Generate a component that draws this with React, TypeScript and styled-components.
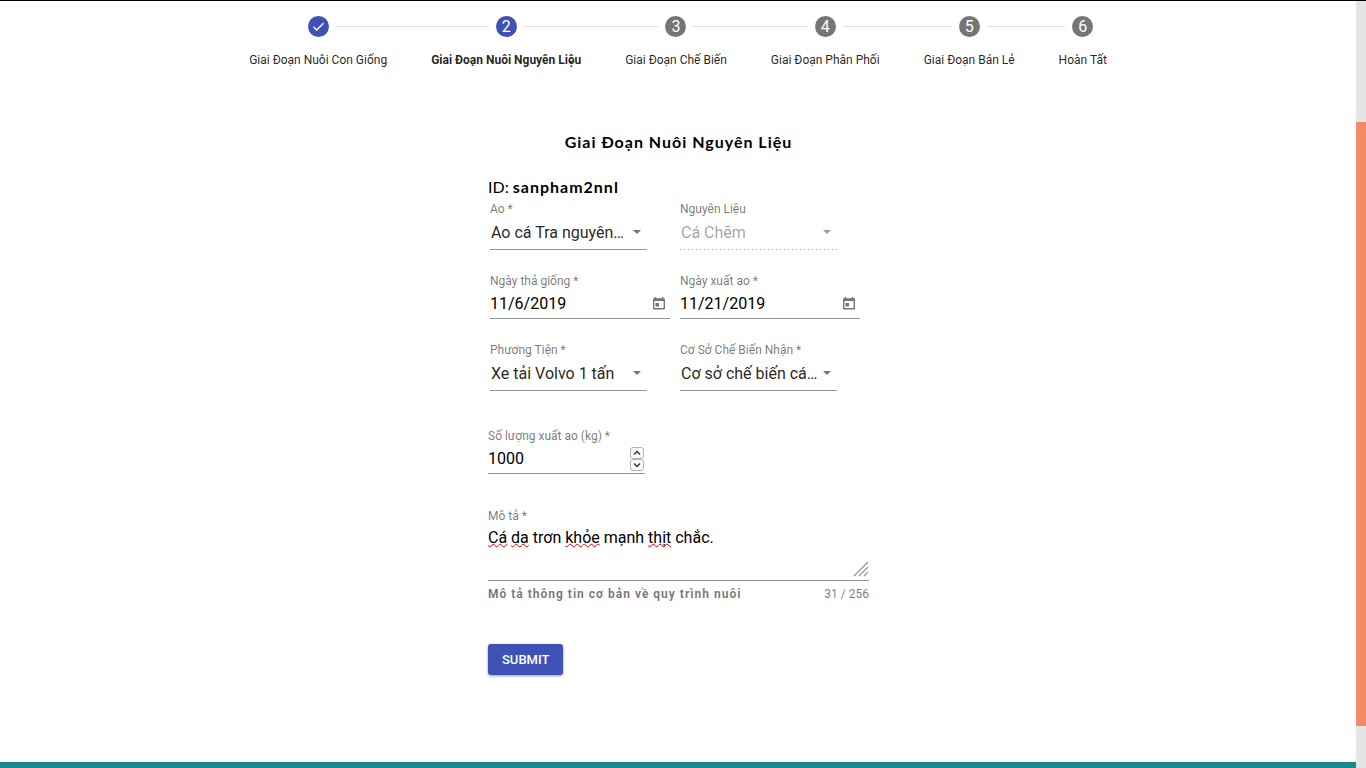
import React, { useState } from "react";
import styled, { createGlobalStyle } from "styled-components";

const GlobalStyle = createGlobalStyle`
  *, *::before, *::after { box-sizing: border-box; }
  body {
    margin: 0;
    background: #fff;
    color: #000;
    font-family: Roboto, "Liberation Sans", sans-serif;
    font-size: 16px;
  }
`;

const Window = styled.div`
  display: flex;
  min-height: 100vh;
  border-top: 1px solid #000;
`;

const Page = styled.div`
  flex: 1;
  min-width: 0;
  display: flex;
  flex-direction: column;
`;

const ScrollTrack = styled.div`
  width: 10px;
  display: grid;
  grid-template-rows: 121fr 604fr 42fr;
  background: #e5e5e5;
`;

const ScrollThumb = styled.div`
  grid-row: 2;
  background: #f18c66;
`;

const Stepper = styled.ol`
  display: flex;
  justify-content: center;
  margin: 0;
  padding: 15px 0 0;
  list-style: none;
`;

const Step = styled.li`
  display: flex;
  flex-direction: column;
  gap: 15px;
`;

const StepTrack = styled.div`
  display: flex;
  align-items: center;
  gap: 8px;
`;

const StepLine = styled.span<{ $hidden?: boolean }>`
  flex: 1;
  height: 1px;
  margin: 0 -1px;
  background: ${(p) => (p.$hidden ? "transparent" : "#e0e0e0")};
`;

const StepCircle = styled.span<{ $on: boolean }>`
  display: flex;
  align-items: center;
  justify-content: center;
  width: 21px;
  height: 21px;
  border-radius: 50%;
  background: ${(p) => (p.$on ? "#3f51b5" : "#757575")};
  color: #fff;
  font-size: 16px;
  line-height: 20px;
`;

const StepLabel = styled.span<{ $active: boolean }>`
  padding: 0 22px;
  font-size: 12px;
  line-height: 16px;
  font-weight: ${(p) => (p.$active ? 700 : 400)};
  color: rgba(0, 0, 0, 0.87);
  white-space: nowrap;
`;

const Form = styled.form`
  width: 100%;
  max-width: 382px;
  margin: 64px auto 0;
  padding-left: 1px;
  flex: 1;
`;

const Title = styled.h1`
  margin: 0;
  font-family: Lato, sans-serif;
  font-size: 16px;
  line-height: 20px;
  font-weight: 700;
  letter-spacing: 1px;
  text-align: center;
`;

const ProductId = styled.p`
  margin: 25px 0 4px;
  font-family: Lato, sans-serif;
  font-size: 16px;
  line-height: 20px;
`;

const Strong = styled.strong`
  letter-spacing: 1px;
`;

const FieldGrid = styled.div`
  display: grid;
  grid-template-columns: 180px 180px;
  gap: 23px 10px;
  padding-left: 2px;
`;

const Field = styled.div<{ $width?: string; $top?: number }>`
  width: ${(p) => p.$width ?? "100%"};
  margin-top: ${(p) => p.$top ?? 0}px;
`;

const Label = styled.label`
  display: block;
  font-size: 12px;
  line-height: 16px;
  color: rgba(0, 0, 0, 0.54);
  white-space: nowrap;
`;

const Control = styled.div<{ $height: number; $disabled?: boolean }>`
  position: relative;
  display: flex;
  align-items: center;
  height: ${(p) => p.$height}px;
  border-bottom: 1px solid #949494;
  ${(p) =>
    p.$disabled &&
    `border-bottom-color: transparent;
     background: repeating-linear-gradient(90deg, #949494 0 1px, transparent 1px 4px) left bottom / 100% 1px no-repeat border-box;`}
`;

const Select = styled.select`
  appearance: none;
  flex: 1;
  min-width: 0;
  height: 24px;
  padding: 0 0 2px 1px;
  border: 0;
  outline: 0;
  background: transparent;
  color: rgba(0, 0, 0, 0.87);
  font: 16px Roboto, sans-serif;
  text-overflow: ellipsis;
  overflow: hidden;
  white-space: nowrap;
  &:disabled {
    color: rgba(0, 0, 0, 0.38);
    opacity: 1;
  }
`;

const Caret = styled.span<{ $disabled?: boolean }>`
  width: 0;
  margin: 0 6px 2px 5px;
  border: 4px solid transparent;
  border-top-color: ${(p) => (p.$disabled ? "#9e9e9e" : "#757575")};
  border-bottom: 0;
`;

const Input = styled.input`
  appearance: textfield;
  flex: 1;
  min-width: 0;
  padding: 0;
  border: 0;
  outline: 0;
  background: transparent;
  color: #000;
  font: 16px/20px Roboto, sans-serif;
  &::-webkit-inner-spin-button { display: none; }
`;

const IconButton = styled.button`
  display: flex;
  margin: 0 4px 0 0;
  padding: 0;
  border: 0;
  background: none;
  color: #757575;
`;

const Spinner = styled.div`
  display: flex;
  flex-direction: column;
  margin-right: 1px;
`;

const SpinButton = styled.button`
  display: flex;
  align-items: center;
  justify-content: center;
  width: 14px;
  height: 12px;
  padding: 0;
  border: 1px solid #b4b4b4;
  border-radius: 3px;
  background: #fafafa;
  color: #333;
`;

const TextControl = styled(Control)`
  align-items: stretch;
`;

const TextArea = styled.textarea`
  flex: 1;
  min-width: 0;
  padding: 4px 0 0;
  border: 0;
  outline: 0;
  resize: none;
  background: transparent;
  color: #000;
  font: 16px/20px Roboto, sans-serif;
`;

const SpellLayer = styled.div`
  position: absolute;
  inset: 0;
  padding-top: 4px;
  color: transparent;
  font: 16px/20px Roboto, sans-serif;
  white-space: pre-wrap;
  pointer-events: none;
`;

const Misspelled = styled.span`
  text-decoration: underline wavy #e00000 1px;
  text-decoration-skip-ink: none;
  text-underline-offset: 0;
`;

const Grip = styled.svg`
  position: absolute;
  right: 0;
  bottom: 3px;
`;

const Hints = styled.div`
  display: flex;
  justify-content: space-between;
  margin-top: 5px;
  font-size: 12px;
  line-height: 16px;
  color: rgba(0, 0, 0, 0.54);
`;

const Submit = styled.button`
  margin: 42px 0;
  height: 31px;
  padding: 0 14px;
  border: 0;
  border-radius: 3px;
  background: #3f51b5;
  color: #fff;
  font: 500 13px Roboto, sans-serif;
  box-shadow: 0 1px 3px rgba(0, 0, 0, 0.4);
`;

const Footer = styled.footer`
  height: 6px;
  background: #1b878b;
`;

const steps = [
  "Giai Đoạn Nuôi Con Giống",
  "Giai Đoạn Nuôi Nguyên Liệu",
  "Giai Đoạn Chế Biến",
  "Giai Đoạn Phân Phối",
  "Giai Đoạn Bán Lẻ",
  "Hoàn Tất",
];

const misspelled = ["Cá", "da", "khỏe", "thịt"];

function SelectField({ id, label, value, disabled }: { id: string; label: string; value: string; disabled?: boolean }) {
  return (
    <Field $width="157px">
      <Label htmlFor={id}>{label}</Label>
      <Control $height={33} $disabled={disabled}>
        <Select id={id} disabled={disabled}>
          <option>{value}</option>
        </Select>
        <Caret $disabled={disabled} />
      </Control>
    </Field>
  );
}

function DateField({ id, label, value }: { id: string; label: string; value: string }) {
  return (
    <Field>
      <Label htmlFor={id}>{label}</Label>
      <Control $height={30}>
        <Input id={id} type="text" defaultValue={value} />
        <IconButton type="button" aria-label="Mở lịch">
          <svg width="14" height="15" viewBox="0 0 14 15" fill="none">
            <path d="M3.5 1v2M10.5 1v2" stroke="currentColor" strokeWidth="1.5" />
            <path d="M1.7 3.2h10.6v9.6H1.7z" stroke="currentColor" strokeWidth="1.4" strokeLinejoin="round" />
            <path d="M1.5 2.5h11v2.5h-11zM3.5 7h3.5v3.5H3.5z" fill="currentColor" />
          </svg>
        </IconButton>
      </Control>
    </Field>
  );
}

export default function App() {
  const [amount, setAmount] = useState(1000);
  const [text, setText] = useState("Cá da trơn khỏe mạnh thịt chắc.");
  const current = 1;

  return (
    <>
      <GlobalStyle />
      <Window>
        <Page>
          <Stepper>
            {steps.map((name, i) => (
              <Step key={name}>
                <StepTrack>
                  <StepLine $hidden={i === 0} />
                  <StepCircle $on={i <= current}>
                    {i < current ? (
                      <svg width="13" height="13" viewBox="0 0 13 13" fill="none" stroke="#fff" strokeWidth="1.4">
                        <path d="M1.5 6.8l3.2 3.2 6.8-6.8" />
                      </svg>
                    ) : (
                      i + 1
                    )}
                  </StepCircle>
                  <StepLine $hidden={i === steps.length - 1} />
                </StepTrack>
                <StepLabel $active={i === current}>{name}</StepLabel>
              </Step>
            ))}
          </Stepper>

          <Form onSubmit={(e) => e.preventDefault()}>
            <Title>Giai Đoạn Nuôi Nguyên Liệu</Title>
            <ProductId>
              ID: <Strong>sanpham2nnl</Strong>
            </ProductId>
            <FieldGrid>
              <SelectField id="pond" label="Ao *" value="Ao cá Tra nguyên liệu" />
              <SelectField id="material" label="Nguyên Liệu" value="Cá Chẽm" disabled />
              <DateField id="start" label="Ngày thả giống *" value="11/6/2019" />
              <DateField id="end" label="Ngày xuất ao *" value="11/21/2019" />
              <SelectField id="vehicle" label="Phương Tiện *" value="Xe tải Volvo 1 tấn" />
              <SelectField id="factory" label="Cơ Sở Chế Biến Nhận *" value="Cơ sở chế biến cá tra" />
            </FieldGrid>

            <Field $width="157px" $top={37}>
              <Label htmlFor="amount">Số lượng xuất ao (kg) *</Label>
              <Control $height={30}>
                <Input id="amount" type="number" value={amount} onChange={(e) => setAmount(Number(e.target.value))} />
                <Spinner>
                  <SpinButton type="button" aria-label="Tăng" onClick={() => setAmount(amount + 1)}>
                    <svg width="8" height="6" viewBox="0 0 8 6" fill="none" stroke="currentColor" strokeWidth="1.4">
                      <path d="M1 4.5l3-3 3 3" />
                    </svg>
                  </SpinButton>
                  <SpinButton type="button" aria-label="Giảm" onClick={() => setAmount(amount - 1)}>
                    <svg width="8" height="6" viewBox="0 0 8 6" fill="none" stroke="currentColor" strokeWidth="1.4">
                      <path d="M1 1.5l3 3 3-3" />
                    </svg>
                  </SpinButton>
                </Spinner>
              </Control>
            </Field>

            <Field $top={34}>
              <Label htmlFor="description">Mô tả *</Label>
              <TextControl $height={57}>
                <TextArea id="description" maxLength={256} value={text} onChange={(e) => setText(e.target.value)} />
                <SpellLayer aria-hidden="true">
                  {text.split(/(\s+)/).map((w, i) => (misspelled.includes(w) ? <Misspelled key={i}>{w}</Misspelled> : w))}
                </SpellLayer>
                <Grip width="16" height="16" viewBox="0 0 16 16" stroke="#999" strokeWidth="1.4">
                  <path d="M1 15L15 1M6 15l9-9M11 15l4-4" />
                </Grip>
              </TextControl>
              <Hints>
                <Strong>Mô tả thông tin cơ bản về quy trình nuôi</Strong>
                <span>{text.length} / 256</span>
              </Hints>
            </Field>

            <Submit type="submit">SUBMIT</Submit>
          </Form>
          <Footer />
        </Page>
        <ScrollTrack>
          <ScrollThumb />
        </ScrollTrack>
      </Window>
    </>
  );
}
